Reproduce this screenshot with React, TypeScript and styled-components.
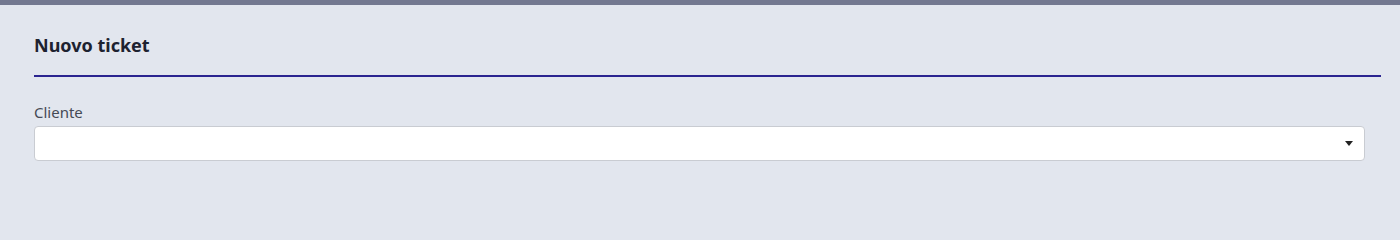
import React from "react";
import styled, { createGlobalStyle } from "styled-components";

const GlobalStyle = createGlobalStyle`
  html, body {
    margin: 0;
    padding: 0;
    background: #e2e6ee;
    font-family: "Noto Sans", "Open Sans", sans-serif;
  }
`;

const Page = styled.div`
  min-height: 240px;
  background: #e2e6ee;
  border-top: 5px solid #737890;
  box-sizing: border-box;
`;

const Panel = styled.div`
  padding: 30px 19px 0 34px;
`;

const Header = styled.div`
  border-bottom: 2px solid #2a2490;
  padding-bottom: 20px;
`;

const Title = styled.h2`
  margin: 0;
  font-size: 18px;
  font-weight: 700;
  color: #1d2230;
  line-height: 20px;
`;

const Form = styled.div`
  padding: 27px 16px 0 0;
`;

const Label = styled.label`
  display: block;
  font-size: 15px;
  color: #454a55;
  line-height: 16px;
  margin-bottom: 6px;
`;

const SelectBox = styled.div`
  height: 35px;
  box-sizing: border-box;
  background: #fff;
  border: 1px solid #c9ccd2;
  border-radius: 4px;
  display: flex;
  align-items: center;
  justify-content: flex-end;
  padding-right: 11px;
`;

const Caret = styled.span`
  width: 0;
  height: 0;
  border-left: 4px solid transparent;
  border-right: 4px solid transparent;
  border-top: 5px solid #222;
`;

export default function App() {
  return (
    <Page>
      <GlobalStyle />
      <Panel>
        <Header>
          <Title>Nuovo ticket</Title>
        </Header>
        <Form>
          <Label>Cliente</Label>
          <SelectBox>
            <Caret />
          </SelectBox>
        </Form>
      </Panel>
    </Page>
  );
}
